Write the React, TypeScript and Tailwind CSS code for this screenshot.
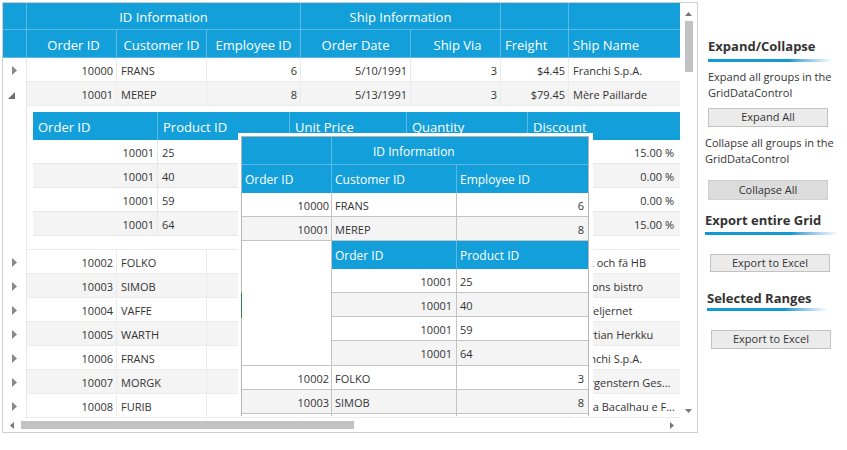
import React from 'react';

type Row = { id: string; cust: string; emp: string; date: string; via: string; freight: string; ship: string };

const rows: Row[] = [
  { id: '10000', cust: 'FRANS', emp: '6', date: '5/10/1991', via: '3', freight: '$4.45', ship: 'Franchi S.p.A.' },
  { id: '10001', cust: 'MEREP', emp: '8', date: '5/13/1991', via: '3', freight: '$79.45', ship: 'Mère Paillarde' },
  { id: '10002', cust: 'FOLKO', emp: '3', date: '5/14/1991', via: '1', freight: '$12.75', ship: 'Folk och fä HB' },
  { id: '10003', cust: 'SIMOB', emp: '8', date: '5/15/1991', via: '2', freight: '$8.53', ship: 'Simons bistro' },
  { id: '10004', cust: 'VAFFE', emp: '1', date: '5/16/1991', via: '3', freight: '$46.82', ship: 'Vaffeljernet' },
  { id: '10005', cust: 'WARTH', emp: '4', date: '5/17/1991', via: '1', freight: '$19.46', ship: 'Wartian Herkku' },
  { id: '10006', cust: 'FRANS', emp: '6', date: '5/18/1991', via: '2', freight: '$4.45', ship: 'Franchi S.p.A.' },
  { id: '10007', cust: 'MORGK', emp: '2', date: '5/19/1991', via: '3', freight: '$32.38', ship: 'Morgenstern Ges...' },
  { id: '10008', cust: 'FURIB', emp: '5', date: '5/20/1991', via: '1', freight: '$55.09', ship: 'Furia Bacalhau e F...' },
];

const mainCols: { k: keyof Row; w: string; a: string }[] = [
  { k: 'id', w: 'w-[90px]', a: 'text-right' },
  { k: 'cust', w: 'w-[90px]', a: 'text-left' },
  { k: 'emp', w: 'w-[94px]', a: 'text-right' },
  { k: 'date', w: 'w-[110px]', a: 'text-right' },
  { k: 'via', w: 'w-[90px]', a: 'text-right' },
  { k: 'freight', w: 'w-[68px]', a: 'text-right' },
  { k: 'ship', w: 'w-[111px]', a: 'text-left' },
];

const details = [
  { id: '10001', pid: '25', price: '$14.00', qty: '12', disc: '15.00 %' },
  { id: '10001', pid: '40', price: '$18.40', qty: '10', disc: '0.00 %' },
  { id: '10001', pid: '59', price: '$55.00', qty: '5', disc: '0.00 %' },
  { id: '10001', pid: '64', price: '$33.25', qty: '20', disc: '15.00 %' },
];

function RightArrow() {
  return (
    <svg width="5" height="9" viewBox="0 0 5 9">
      <polygon points="0,0 5,4.5 0,9" fill="#8a8a8a" />
    </svg>
  );
}

function ExpandedArrow() {
  return (
    <svg width="7" height="7" viewBox="0 0 7 7">
      <polygon points="7,0 7,7 0,7" fill="#6e6e6e" />
    </svg>
  );
}

function MainRow({ r, gray, expanded }: { r: Row; gray: boolean; expanded?: boolean }) {
  return (
    <div className="flex h-[24px]">
      <div className={`w-[24px] shrink-0 bg-white border-r border-[#e6e6e6] flex items-center ${expanded ? 'pl-[5px] pt-[2px]' : 'pl-[9px]'}`}>
        {expanded ? <ExpandedArrow /> : <RightArrow />}
      </div>
      <div className={`flex border-b border-[#ebebeb] ${gray ? 'bg-[#f4f4f4]' : 'bg-white'}`}>
        {mainCols.map((c, i) => (
          <div
            key={c.k}
            className={`${c.w} shrink-0 ${c.a} ${c.a === 'text-left' ? 'pl-[4px] pr-[2px]' : 'pr-[3px] pl-[2px]'} ${i < mainCols.length - 1 ? 'border-r border-[#ebebeb]' : ''} whitespace-nowrap overflow-hidden pt-[2px] leading-[21px] text-[11px] text-[#333333]`}
          >
            {r[c.k]}
          </div>
        ))}
      </div>
    </div>
  );
}

function MainHeader() {
  const h1 = 'shrink-0 border-r border-b border-[#5bb9e5] flex items-center justify-center pt-[4px] text-[13px] text-white';
  const h2 = 'shrink-0 border-r border-b border-[#5bb9e5] flex items-center pt-[4px] text-[13px] text-white whitespace-nowrap';
  return (
    <div className="bg-[#129fda]">
      <div className="flex h-[27px]">
        <div className={`${h1} w-[24px]`} />
        <div className={`${h1} w-[274px]`}>ID Information</div>
        <div className={`${h1} w-[200px]`}>Ship Information</div>
        <div className={`${h1} w-[68px]`} />
        <div className={`${h1} w-[111px] border-r-0`} />
      </div>
      <div className="flex h-[28px]">
        <div className={`${h2} w-[24px]`} />
        <div className={`${h2} w-[90px] justify-center pl-[4px]`}>Order ID</div>
        <div className={`${h2} w-[90px] justify-center`}>Customer ID</div>
        <div className={`${h2} w-[94px] justify-center`}>Employee ID</div>
        <div className={`${h2} w-[110px] justify-center`}>Order Date</div>
        <div className={`${h2} w-[90px] justify-center pl-[4px]`}>Ship Via</div>
        <div className={`${h2} w-[68px] pl-[4px]`}>Freight</div>
        <div className={`${h2} w-[111px] pl-[4px] border-r-0`}>Ship Name</div>
      </div>
    </div>
  );
}

function DetailArea() {
  const nh = 'shrink-0 h-[28px] border-r border-[#5bb9e5] flex items-center pl-[5px] pt-[4px] text-[13px] text-white whitespace-nowrap';
  const nc = 'shrink-0 border-r border-[#e6e6e6] pt-[2px] leading-[21px] text-[11px] text-[#333333] whitespace-nowrap overflow-hidden';
  return (
    <div className="flex h-[144px]">
      <div className="w-[24px] shrink-0 border-r border-[#e6e6e6] bg-white" />
      <div className="w-[653px] bg-white border-b border-[#ebebeb] pl-[6px] pt-[6px]">
        <div className="flex bg-[#129fda]">
          <div className={`${nh} w-[125px]`}>Order ID</div>
          <div className={`${nh} w-[132px]`}>Product ID</div>
          <div className={`${nh} w-[117px]`}>Unit Price</div>
          <div className={`${nh} w-[121px]`}>Quantity</div>
          <div className={`${nh} w-[149px] border-r-0`}>Discount</div>
        </div>
        {details.map((d, i) => (
          <div key={i} className={`flex h-[24px] border-b border-[#e6e6e6] ${i % 2 ? 'bg-[#f4f4f4]' : 'bg-white'}`}>
            <div className={`${nc} w-[125px] text-right pr-[3px]`}>{d.id}</div>
            <div className={`${nc} w-[132px] pl-[4px]`}>{d.pid}</div>
            <div className={`${nc} w-[117px] text-right pr-[3px]`}>{d.price}</div>
            <div className={`${nc} w-[121px] text-right pr-[3px]`}>{d.qty}</div>
            <div className={`${nc} w-[149px] text-right pr-[3px] border-r-0`}>{d.disc}</div>
          </div>
        ))}
      </div>
    </div>
  );
}

function Popup() {
  const hb = 'border-[#5bb9e5]';
  const pc = 'shrink-0 border-r border-[#c4c4c4] pt-[2px] leading-[21px] text-[11px] text-[#333333] whitespace-nowrap overflow-hidden';
  const prow = (id: string, cust: string, emp: string, gray: boolean) => (
    <div className={`flex h-[24px] border-b border-[#c4c4c4] ${gray ? 'bg-[#f4f4f4]' : 'bg-white'}`}>
      <div className={`${pc} w-[90px] text-right pr-[2px]`}>{id}</div>
      <div className={`${pc} w-[125px] pl-[3px]`}>{cust}</div>
      <div className={`${pc} w-[131px] text-right pr-[4px] border-r-0`}>{emp}</div>
    </div>
  );
  return (
    <div className="absolute left-[235px] top-[130px] w-[355px] h-[283px] bg-white pl-[3px] pr-[4px] pt-[3px] overflow-hidden">
      <div className="border border-[#b4b4b4] w-[348px]">
        <div className="bg-[#129fda] text-white text-[12px]">
          <div className={`flex h-[28px] border-b ${hb}`}>
            <div className={`w-[90px] shrink-0 border-r ${hb}`} />
            <div className="w-[256px] flex items-center pt-[2px] pl-[41px] whitespace-nowrap">ID Information</div>
          </div>
          <div className="flex h-[28px]">
            <div className={`w-[90px] shrink-0 border-r ${hb} flex items-center pt-[2px] pl-[3px]`}>Order ID</div>
            <div className={`w-[125px] shrink-0 border-r ${hb} flex items-center pt-[2px] pl-[3px]`}>Customer ID</div>
            <div className="w-[131px] shrink-0 flex items-center pt-[2px] pl-[3px]">Employee ID</div>
          </div>
        </div>
        {prow('10000', 'FRANS', '6', false)}
        {prow('10001', 'MEREP', '8', true)}
        <div className="flex border-b border-[#c4c4c4]">
          <div className="w-[90px] shrink-0 border-r border-[#c4c4c4] bg-white" />
          <div className="w-[256px]">
            <div className="flex h-[28px] bg-[#129fda] text-white text-[12px]">
              <div className={`w-[125px] shrink-0 border-r ${hb} flex items-center pt-[2px] pl-[3px]`}>Order ID</div>
              <div className="w-[131px] shrink-0 flex items-center pt-[2px] pl-[3px]">Product ID</div>
            </div>
            {details.map((d, i) => (
              <div key={i} className={`flex h-[24px] ${i < 3 ? 'border-b border-[#c4c4c4]' : ''} ${i % 2 ? 'bg-[#f4f4f4]' : 'bg-white'}`}>
                <div className={`${pc} w-[125px] text-right pr-[4px]`}>{d.id}</div>
                <div className={`${pc} w-[131px] pl-[3px] border-r-0`}>{d.pid}</div>
              </div>
            ))}
          </div>
        </div>
        {prow('10002', 'FOLKO', '3', false)}
        {prow('10003', 'SIMOB', '8', true)}
        {prow('10004', 'VAFFE', '1', false)}
      </div>
    </div>
  );
}

function Btn({ label, dark, cls }: { label: string; dark?: boolean; cls: string }) {
  return (
    <div
      className={`${cls} w-[120px] flex items-center justify-center border ${dark ? 'bg-[#dcdcdc] border-[#d0d0d0]' : 'bg-[#ebebeb] border-[#c2c2c2]'} text-[11px] text-[#333333]`}
    >
      {label}
    </div>
  );
}

function Bar({ cls }: { cls: string }) {
  return <div className={`${cls} h-[3px] bg-linear-to-r from-[#1299d6] via-[#1299d6] via-65% to-white`} />;
}

export default function App() {
  return (
    <div className="w-[847px] h-[450px] bg-white flex font-['Open_Sans',sans-serif] overflow-hidden">
      <div className="ml-[2px] mt-[2px] w-[696px] h-[431px] border border-[#cfcfcf] flex flex-col shrink-0">
        <div className="flex h-[415px]">
          <div className="relative w-[677px] h-[415px] overflow-hidden">
            <MainHeader />
            <MainRow r={rows[0]} gray={false} />
            <MainRow r={rows[1]} gray={true} expanded />
            <DetailArea />
            {rows.slice(2).map((r, i) => (
              <MainRow key={r.id} r={r} gray={i % 2 === 1} />
            ))}
            <Popup />
            <div className="absolute left-[238px] top-[290px] w-[1px] h-[25px] bg-[#2f7a4f]" />
          </div>
          <div className="w-[17px] h-[415px] flex flex-col items-center bg-white">
            <svg width="7" height="4" viewBox="0 0 7 4" className="mt-[9px]">
              <polygon points="0,4 3.5,0 7,4" fill="#777777" />
            </svg>
            <div className="mt-[5px] w-[8px] h-[51px] bg-[#c2c2c2] ml-[1px]" />
            <div className="flex-1" />
            <svg width="7" height="4" viewBox="0 0 7 4" className="mb-[5px]">
              <polygon points="0,0 7,0 3.5,4" fill="#777777" />
            </svg>
          </div>
        </div>
        <div className="flex h-[14px] items-center">
          <div className="w-[677px] flex items-center">
            <svg width="4" height="7" viewBox="0 0 4 7" className="ml-[7px]">
              <polygon points="4,0 0,3.5 4,7" fill="#777777" />
            </svg>
            <div className="ml-[7px] w-[333px] h-[8px] bg-[#c2c2c2]" />
            <div className="flex-1" />
            <svg width="4" height="7" viewBox="0 0 4 7" className="mr-[6px]">
              <polygon points="0,0 4,3.5 0,7" fill="#777777" />
            </svg>
          </div>
        </div>
      </div>

      <div className="flex flex-col text-[#333333]">
        <div className="mt-[38px] pl-[10px] text-[13px] font-bold leading-[16px] whitespace-nowrap">Expand/Collapse</div>
        <Bar cls="mt-[5px] ml-[10px] w-[125px]" />
        <div className="mt-[7px] pl-[10px] text-[11px] leading-[16px]">
          Expand all groups in the
          <br />
          GridDataControl
        </div>
        <Btn label="Expand All" cls="mt-[7px] ml-[10px] h-[19px]" />
        <div className="mt-[8px] pl-[7px] text-[11px] leading-[16px]">
          Collapse all groups in the
          <br />
          GridDataControl
        </div>
        <Btn label="Collapse All" dark cls="mt-[13px] ml-[10px] h-[20px]" />
        <div className="mt-[12px] pl-[7px] text-[13px] font-bold leading-[16px] whitespace-nowrap">Export entire Grid</div>
        <Bar cls="mt-[4px] ml-[7px] w-[133px]" />
        <Btn label="Export to Excel" cls="mt-[19px] ml-[12px] h-[18px]" />
        <div className="mt-[18px] pl-[9px] text-[13px] font-bold leading-[16px] whitespace-nowrap">Selected Ranges</div>
        <Bar cls="mt-[2px] ml-[9px] w-[121px]" />
        <Btn label="Export to Excel" cls="mt-[19px] ml-[13px] h-[19px]" />
      </div>
    </div>
  );
}
